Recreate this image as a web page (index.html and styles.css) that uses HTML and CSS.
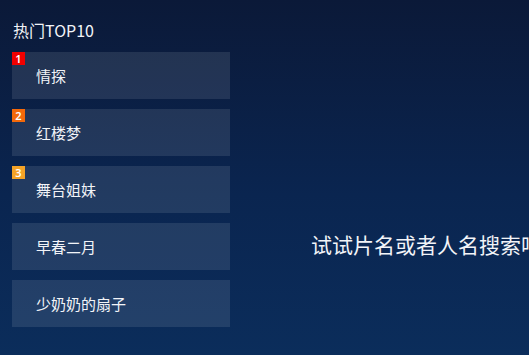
FILE: index.html
```html
<!DOCTYPE html>
<html lang="zh-CN">
<head>
  <meta charset="UTF-8">
  <meta name="viewport" content="width=device-width, initial-scale=1.0">
  <title>搜索</title>
  <link rel="stylesheet" href="styles.css">
</head>
<body>
  <main class="search-page">
    <section class="hot">
      <h2 class="hot__title">热门TOP10</h2>
      <ul class="hot__list">
        <li class="hot__item"><span class="rank rank--1">1</span>情探</li>
        <li class="hot__item"><span class="rank rank--2">2</span>红楼梦</li>
        <li class="hot__item"><span class="rank rank--3">3</span>舞台姐妹</li>
        <li class="hot__item">早春二月</li>
        <li class="hot__item">少奶奶的扇子</li>
      </ul>
    </section>
    <section class="hint">
      <p class="hint__text">试试片名或者人名搜索吧</p>
    </section>
  </main>
</body>
</html>
```

FILE: styles.css
```css
* {
  box-sizing: border-box;
  margin: 0;
  padding: 0;
}
html, body {
  width: 529px;
  height: 355px;
  overflow: hidden;
}
body {
  font-family: "Noto Sans CJK SC", "Noto Sans", sans-serif;
  color: #f2f4f8;
  background: linear-gradient(180deg, #0b1938 0%, #0a2550 55%, #0b2d5b 100%);
}

.search-page {
  display: flex;
  height: 100%;
}

/* Hot list */

.hot {
  flex: none;
  width: 218px;
  margin-left: 12px;
  padding-top: 20px;
}
.hot__title {
  font-size: 16px;
  font-weight: normal;
  line-height: 20px;
  height: 20px;
  margin-left: 1px;
}
.hot__list {
  list-style: none;
  margin-top: 12px;
  display: flex;
  flex-direction: column;
  gap: 10px;
}
.hot__item {
  position: relative;
  height: 47px;
  display: flex;
  align-items: center;
  padding-left: 24px;
  font-size: 15px;
  background: rgba(255, 255, 255, 0.1);
}
.rank {
  position: absolute;
  top: 0;
  left: 0;
  width: 13px;
  height: 13px;
  font-family: "Noto Sans", sans-serif;
  font-size: 11px;
  font-weight: 600;
  line-height: 13px;
  text-align: center;
  color: #fff;
}
.rank--1 { background: #f00000; }
.rank--2 { background: #f4690a; }
.rank--3 { background: #f4a327; }

/* Hint */

.hint {
  flex: 1;
  padding-left: 81px;
  padding-top: 230px;
  overflow: hidden;
}
.hint__text {
  font-size: 21px;
  line-height: 28px;
  white-space: nowrap;
}
```
